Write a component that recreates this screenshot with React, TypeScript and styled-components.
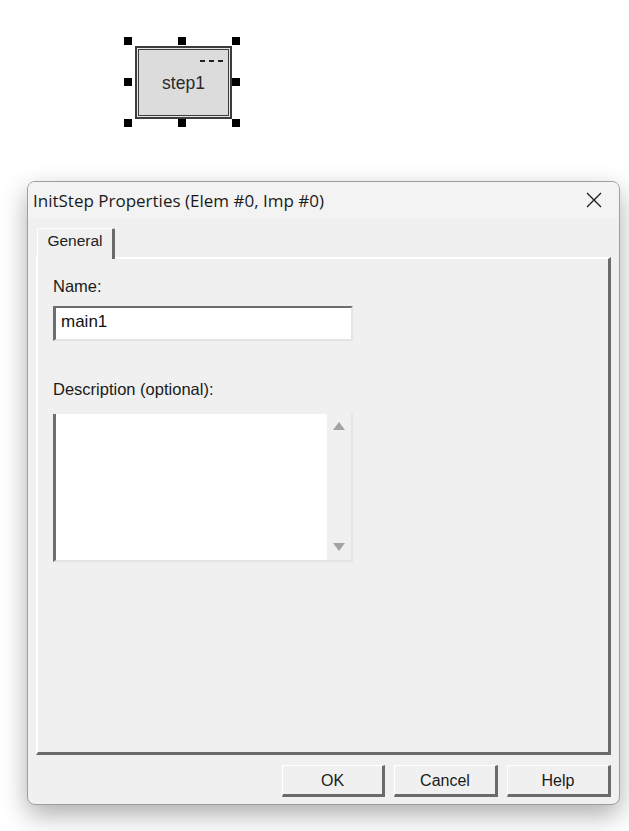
import type { FC } from 'react';
import styled, { createGlobalStyle } from 'styled-components';

const GlobalStyle = createGlobalStyle`
  html, body {
    margin: 0;
    padding: 0;
    background: #ffffff;
  }
  body {
    font-family: 'Liberation Sans', Arial, sans-serif;
    color: #000;
  }
`;

const Page = styled.div`
  width: 629px;
  height: 831px;
  overflow: hidden;
  background: #fff;
`;

/* diagram canvas with the selected step node */
const Canvas = styled.div`
  position: relative;
  height: 181px;
`;

const Selection = styled.div`
  position: absolute;
  left: 124px;
  top: 37px;
  width: 116px;
  height: 90px;
`;

const Handle = styled.span<{ $x: number; $y: number }>`
  position: absolute;
  width: 8px;
  height: 8px;
  background: #000;
  left: ${(p) => `calc(${p.$x}% - ${(p.$x / 100) * 8}px)`};
  top: ${(p) => `calc(${p.$y}% - ${(p.$y / 100) * 8}px)`};
`;

const StepNode = styled.div`
  position: absolute;
  left: 11px;
  top: 9px;
  width: 97px;
  height: 73px;
  box-sizing: border-box;
  border: 2px solid #3c3c3c;
  padding: 1px;
  background: #e6e6e6;
`;

const StepInner = styled.div`
  position: relative;
  height: 100%;
  box-sizing: border-box;
  border: 1px solid #3c3c3c;
  background: #dcdcdc;
  display: flex;
  align-items: center;
  justify-content: center;
  font-size: 17.5px;
  color: #2a2a2a;
  padding-top: 2px;
`;

const Dashes = styled.span`
  position: absolute;
  right: 5px;
  top: 10px;
  display: flex;
  gap: 4px;
  span {
    width: 5px;
    height: 1.5px;
    background: #222;
  }
`;

/* dialog */
const Dialog = styled.div`
  margin-left: 27px;
  width: 593px;
  height: 624px;
  box-sizing: border-box;
  border: 1px solid #9e9e9e;
  border-radius: 8px;
  background: #f0f0f0;
  box-shadow: 0 10px 26px rgba(0, 0, 0, 0.32);
  display: flex;
  flex-direction: column;
  overflow: hidden;
`;

const TitleBar = styled.div`
  height: 36px;
  background: #f3f3f3;
  display: flex;
  align-items: center;
  justify-content: space-between;
  padding: 0 17px 0 5px;
  font-family: 'Open Sans', 'Noto Sans', sans-serif;
  font-size: 17px;
  color: #1a1a1a;
`;

const CloseIcon = styled.svg`
  width: 16px;
  height: 16px;
`;

const Body = styled.div`
  flex: 1;
  display: flex;
  flex-direction: column;
  padding: 10px 8px 7px 8px;
`;

const TabRow = styled.div`
  display: flex;
  height: 29px;
  padding-left: 1px;
  position: relative;
  z-index: 1;
`;

const Tab = styled.div`
  width: 78px;
  box-sizing: border-box;
  border-top: 1px solid #ffffff;
  border-left: 1px solid #ffffff;
  border-right: 3px solid #6b6b6b;
  border-radius: 2px 2px 0 0;
  background: #f0f0f0;
  display: flex;
  align-items: center;
  justify-content: center;
  font-size: 15.5px;
  color: #222;
  margin-bottom: -2px;
  padding-bottom: 6px;
`;

const TabPanel = styled.div`
  height: 498px;
  box-sizing: border-box;
  border-top: 2px solid #ffffff;
  border-left: 2px solid #ffffff;
  border-right: 3px solid #6b6b6b;
  border-bottom: 3px solid #6b6b6b;
  padding: 18px 0 0 15px;
  display: flex;
  flex-direction: column;
`;

const Label = styled.div<{ $gap?: number }>`
  font-size: 16.5px;
  color: #1a1a1a;
  height: 18px;
  line-height: 18px;
  margin-top: ${(p) => p.$gap ?? 0}px;
`;

const TextInput = styled.div`
  margin-top: 11px;
  width: 300px;
  height: 35px;
  box-sizing: border-box;
  border-top: 2px solid #6e6e6e;
  border-left: 3px solid #6e6e6e;
  border-right: 2px solid #e4e4e4;
  border-bottom: 2px solid #e4e4e4;
  background: #fff;
  font-size: 17px;
  line-height: 18px;
  padding: 5px 0 0 5px;
  color: #111;
`;

const TextArea = styled.div`
  margin-top: 16px;
  width: 300px;
  height: 148px;
  box-sizing: border-box;
  border-left: 3px solid #6e6e6e;
  border-bottom: 2px solid #e4e4e4;
  border-right: 2px solid #e4e4e4;
  background: #fff;
  display: flex;
  justify-content: flex-end;
`;

const ScrollBar = styled.div`
  width: 24px;
  background: #f0f0f0;
  display: flex;
  flex-direction: column;
  justify-content: space-between;
  align-items: center;
  padding: 8px 0 9px;
`;

const Arrow = styled.span<{ $down?: boolean }>`
  width: 0;
  height: 0;
  border-left: 6px solid transparent;
  border-right: 6px solid transparent;
  ${(p) => (p.$down ? 'border-top: 8px solid #a3a3a3;' : 'border-bottom: 8px solid #a3a3a3;')}
`;

const ButtonRow = styled.div`
  margin-top: 10px;
  display: flex;
  justify-content: flex-end;
  gap: 9px;
`;

const Button = styled.button<{ $width: number }>`
  width: ${(p) => p.$width}px;
  height: 32px;
  box-sizing: border-box;
  background: #f0f0f0;
  border: none;
  border-top: 1px solid #ffffff;
  border-left: 1px solid #ffffff;
  border-right: 3px solid #6b6b6b;
  border-bottom: 3px solid #6b6b6b;
  font-family: 'Liberation Sans', Arial, sans-serif;
  font-size: 16px;
  color: #1a1a1a;
  padding: 2px 0 0;
`;

const handles: [number, number][] = [
  [0, 0], [50, 0], [100, 0],
  [0, 50], [100, 50],
  [0, 100], [50, 100], [100, 100]
];

const App: FC = () => {
  return (
    <Page>
      <GlobalStyle />
      <Canvas>
        <Selection>
          {handles.map(([x, y]) => (
            <Handle key={`${x}-${y}`} $x={x} $y={y} />
          ))}
          <StepNode>
            <StepInner>
              <Dashes>
                <span />
                <span />
                <span />
              </Dashes>
              step1
            </StepInner>
          </StepNode>
        </Selection>
      </Canvas>
      <Dialog>
        <TitleBar>
          <span>InitStep Properties (Elem #0, Imp #0)</span>
          <CloseIcon viewBox="0 0 16 16">
            <path d="M1 1 L15 15 M15 1 L1 15" stroke="#1a1a1a" strokeWidth="1.3" fill="none" />
          </CloseIcon>
        </TitleBar>
        <Body>
          <TabRow>
            <Tab>General</Tab>
          </TabRow>
          <TabPanel>
            <Label>Name:</Label>
            <TextInput>main1</TextInput>
            <Label $gap={39}>Description (optional):</Label>
            <TextArea>
              <ScrollBar>
                <Arrow />
                <Arrow $down />
              </ScrollBar>
            </TextArea>
          </TabPanel>
          <ButtonRow>
            <Button $width={103}>OK</Button>
            <Button $width={104}>Cancel</Button>
            <Button $width={104}>Help</Button>
          </ButtonRow>
        </Body>
      </Dialog>
    </Page>
  );
};

export default App;
